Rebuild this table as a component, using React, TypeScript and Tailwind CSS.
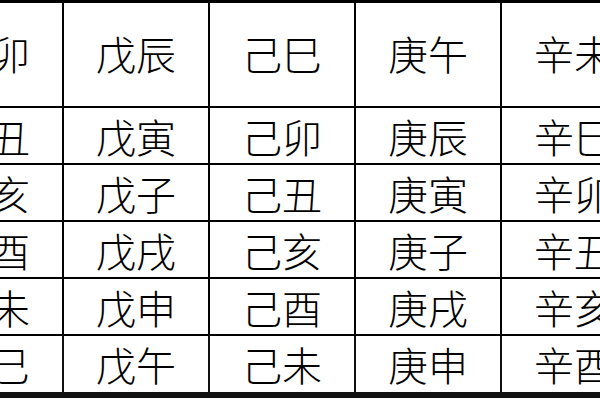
const header = ['丁卯', '戊辰', '己巳', '庚午', '辛未']

const rows = [
  ['丁丑', '戊寅', '己卯', '庚辰', '辛巳'],
  ['丁亥', '戊子', '己丑', '庚寅', '辛卯'],
  ['丁酉', '戊戌', '己亥', '庚子', '辛丑'],
  ['丁未', '戊申', '己酉', '庚戌', '辛亥'],
  ['丁巳', '戊午', '己未', '庚申', '辛酉'],
]

export default function App() {
  return (
    <div
      className="h-[400px] w-[600px] overflow-hidden bg-white text-[40px] font-light leading-none text-black"
      style={{ fontFamily: '"Noto Sans CJK SC", "Noto Sans", sans-serif' }}
    >
      <div className="ml-[-82px] w-max border-t-[3px] border-black">
        <div className="flex">
          {header.map((t) => (
            <div
              key={t}
              className="flex h-[105px] w-[146px] items-center justify-center border-r-2 border-b-2 border-black pb-1"
            >
              {t}
            </div>
          ))}
        </div>
        {rows.map((r, i) => (
          <div key={i} className="flex">
            {r.map((t) => (
              <div
                key={t}
                className={
                  i === rows.length - 1
                    ? 'flex h-[62px] w-[146px] items-center justify-center border-r-2 border-b-[6px] border-[#111]'
                    : 'flex h-[57px] w-[146px] items-center justify-center border-r-2 border-b-2 border-black'
                }
              >
                {t}
              </div>
            ))}
          </div>
        ))}
      </div>
    </div>
  )
}
